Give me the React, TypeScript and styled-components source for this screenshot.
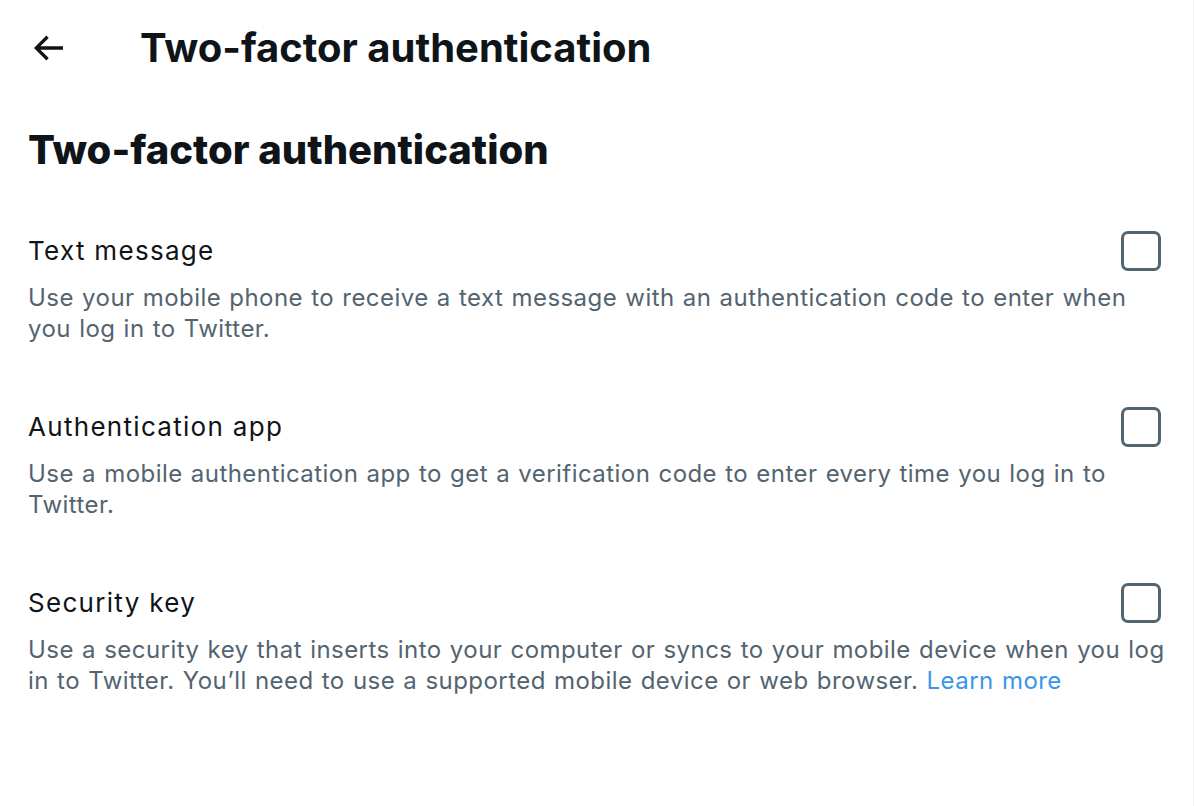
import styled, { createGlobalStyle } from 'styled-components';

const GlobalStyle = createGlobalStyle`
  html, body {
    margin: 0;
    padding: 0;
    background: #ffffff;
  }
  body {
    font-family: Inter, "Noto Sans", "Liberation Sans", sans-serif;
    color: #0f1419;
    -webkit-font-smoothing: antialiased;
  }
`;

type Method = {
  id: string;
  title: string;
  desc: string;
  link?: string;
};

const methods: Method[] = [
  {
    id: 'sms',
    title: 'Text message',
    desc: 'Use your mobile phone to receive a text message with an authentication code to enter when you log in to Twitter.',
  },
  {
    id: 'app',
    title: 'Authentication app',
    desc: 'Use a mobile authentication app to get a verification code to enter every time you log in to Twitter.',
  },
  {
    id: 'key',
    title: 'Security key',
    desc: 'Use a security key that inserts into your computer or syncs to your mobile device when you log in to Twitter. You’ll need to use a supported mobile device or web browser.',
    link: 'Learn more',
  },
];

const BackArrow = () => (
  <svg viewBox="0 0 24 24" width="40" height="40" aria-hidden="true">
    <path
      fill="#0f1419"
      d="M7.414 13l5.043 5.04-1.414 1.42L3.586 12l7.457-7.46 1.414 1.42L7.414 11H21v2H7.414z"
    />
  </svg>
);

const App = () => {
  return (
    <>
      <GlobalStyle />
      <Page>
        <Header>
          <BackButton aria-label="Back">
            <BackArrow />
          </BackButton>
          <HeaderTitle>Two-factor authentication</HeaderTitle>
        </Header>

        <SectionTitle>Two-factor authentication</SectionTitle>

        <MethodList>
          {methods.map((m) => (
            <MethodItem key={m.id}>
              <MethodRow>
                <MethodTitle>{m.title}</MethodTitle>
                <CheckBox type="checkbox" aria-label={m.title} />
              </MethodRow>
              <MethodDesc>
                {m.desc}
                {m.link && (
                  <>
                    {' '}
                    <LearnMore href="#">{m.link}</LearnMore>
                  </>
                )}
              </MethodDesc>
            </MethodItem>
          ))}
        </MethodList>
      </Page>
    </>
  );
};

const Page = styled.main`
  width: 1194px;
  min-height: 806px;
  box-sizing: border-box;
  border-right: 1px solid #eff3f4;
  display: flex;
  flex-direction: column;
`;

const Header = styled.header`
  height: 96px;
  display: flex;
  flex-direction: row;
  align-items: center;
  gap: 72px;
  padding: 0 28px;
`;

const BackButton = styled.button`
  width: 40px;
  height: 40px;
  padding: 0;
  border: none;
  background: transparent;
  display: flex;
  align-items: center;
  justify-content: center;
  cursor: pointer;
`;

const HeaderTitle = styled.h2`
  margin: 0;
  font-size: 40px;
  line-height: 48px;
  font-weight: 700;
  color: #0f1419;
`;

const SectionTitle = styled.h1`
  margin: 30px 0 0;
  padding: 0 28px;
  font-size: 40px;
  line-height: 48px;
  font-weight: 800;
  color: #0f1419;
`;

const MethodList = styled.div`
  display: flex;
  flex-direction: column;
  gap: 63px;
  padding: 57px 28px 0;
`;

const MethodItem = styled.div`
  display: flex;
  flex-direction: column;
  gap: 11px;
`;

const MethodRow = styled.label`
  display: flex;
  flex-direction: row;
  align-items: center;
  justify-content: space-between;
  height: 40px;
  cursor: pointer;
`;

const MethodTitle = styled.span`
  font-size: 26px;
  line-height: 40px;
  font-weight: 400;
  letter-spacing: 1.3px;
  color: #0f1419;
`;

const CheckBox = styled.input`
  appearance: none;
  -webkit-appearance: none;
  margin: 0 4px 0 0;
  width: 40px;
  height: 40px;
  box-sizing: border-box;
  border: 3px solid #536471;
  border-radius: 7px;
  background: #ffffff;
  cursor: pointer;
`;

const MethodDesc = styled.p`
  margin: 0 -4px 0 0;
  font-size: 24px;
  line-height: 31px;
  letter-spacing: 0.45px;
  word-spacing: 1px;
  color: #536471;
`;

const LearnMore = styled.a`
  color: #3a96ea;
  text-decoration: none;
`;

export default App;
